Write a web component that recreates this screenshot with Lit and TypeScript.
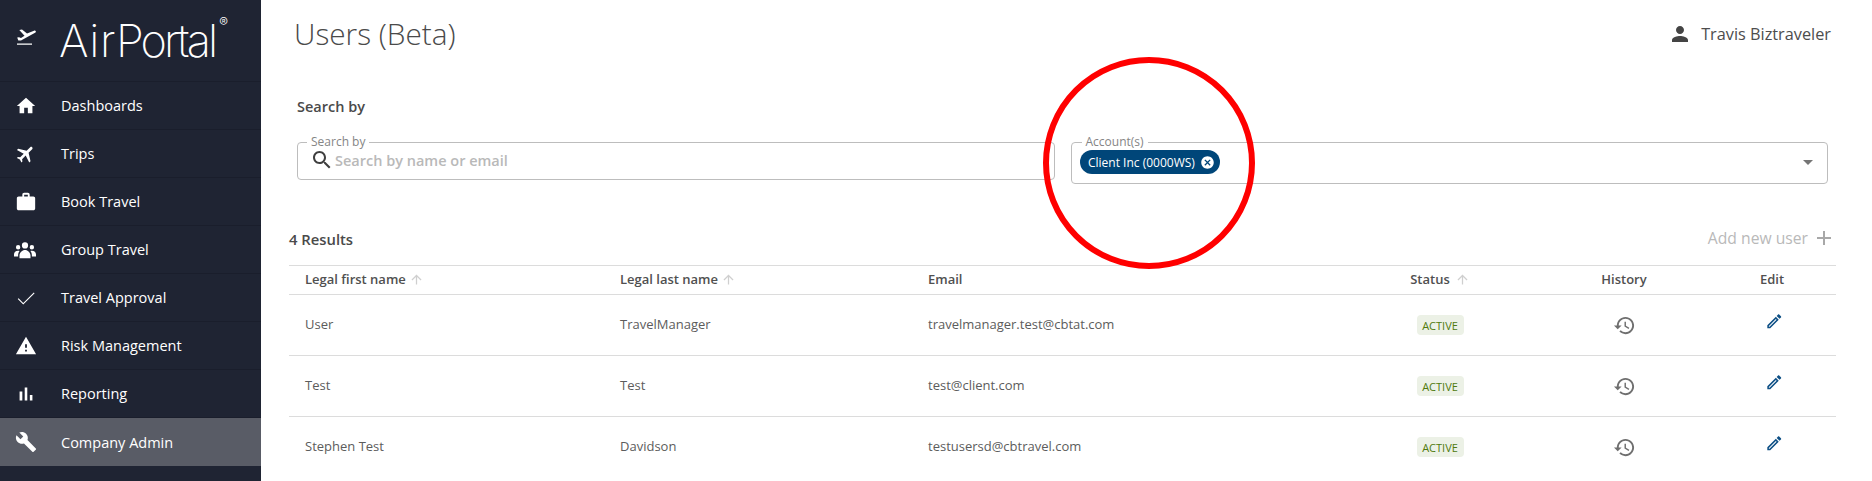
import { LitElement, html, css, svg } from "lit";
import { customElement } from "lit/decorators.js";

const P = {
  home: "M10 20v-6h4v6h5v-8h3L12 3 2 12h3v8z",
  flight: "M21 16v-2l-8-5V3.5c0-.83-.67-1.5-1.5-1.5S10 2.67 10 3.5V9l-8 5v2l8-2.5V19l-2 1.5V22l3.5-1 3.5 1v-1.5L13 19v-5.5l8 2.5z",
  work: "M20 6h-4V4c0-1.11-.89-2-2-2h-4c-1.11 0-2 .89-2 2v2H4c-1.11 0-1.99.89-1.99 2L2 19c0 1.11.89 2 2 2h16c1.11 0 2-.89 2-2V8c0-1.11-.89-2-2-2zm-6 0h-4V4h4v2z",
  groups: "M12 3.6a3.4 3.4 0 1 0 0 6.8 3.4 3.4 0 0 0 0-6.8zM4.5 6.6a2.4 2.4 0 1 0 0 4.8 2.4 2.4 0 0 0 0-4.8zM19.5 6.6a2.4 2.4 0 1 0 0 4.8 2.4 2.4 0 0 0 0-4.8zM6 21v-3c0-3 3-6 6-6s6 3 6 6v3zM0 19v-2.200c0-2.200 1.800-4 4.500-4 .6 0 1.200.1 1.600.3C5 14.500 4.500 16 4.500 18v1zM24 19v-2.200c0-2.200-1.800-4-4.500-4-.6 0-1.200.1-1.600.3C19 14.500 19.500 16 19.500 18v1z",
  done: "M9 17.4L3.9 12.3l-.9.9L9 19.2 21.4 6.8l-.9-.9z",
  warning: "M1 21h22L12 2 1 21zm12-3h-2v-2h2v2zm0-4h-2v-4h2v4z",
  bars: "M5 9.2h3V19H5zM10.6 5h2.8v14h-2.8zm5.6 8H19v6h-2.8z",
  build: "M22.7 19l-9.1-9.1c.9-2.3.4-5-1.5-6.9-2-2-5-2.4-7.4-1.3L9 6 6 9 1.6 4.7C.4 7.1.9 10.1 2.9 12.1c1.9 1.9 4.6 2.4 6.9 1.5l9.1 9.1c.4.4 1 .4 1.4 0l2.3-2.3c.5-.4.5-1.1.1-1.4z",
  takeoff: "M5.3 8L8 7.6L13 11.5L20 8.700C21.500 8.200 22.500 9.500 21.500 10.600L7 18.600L4.300 18.600L3.200 15.500L5 15.200L7 16L10.500 13.800ZM3 21.500h15v1.200H3z",
  person: "M12 12c2.21 0 4-1.790 4-4s-1.790-4-4-4-4 1.790-4 4 1.790 4 4 4zm0 2c-2.670 0-8 1.340-8 4v2h16v-2c0-2.660-5.330-4-8-4z",
  search: "M15.5 14h-.79l-.28-.27C15.41 12.59 16 11.11 16 9.5 16 5.91 13.09 3 9.5 3S3 5.91 3 9.5 5.91 16 9.5 16c1.61 0 3.09-.59 4.23-1.57l.27.28v.79l5 4.99L20.49 19l-4.99-5zm-6 0C7.01 14 5 11.99 5 9.5S7.01 5 9.5 5 14 7.01 14 9.5 11.99 14 9.5 14z",
  history: "M13 3c-4.97 0-9 4.03-9 9H1l3.89 3.89.07.14L9 12H6c0-3.87 3.13-7 7-7s7 3.13 7 7-3.13 7-7 7c-1.93 0-3.68-.79-4.94-2.06l-1.42 1.42C8.27 19.99 10.51 21 13 21c4.97 0 9-4.03 9-9s-4.03-9-9-9zm-1 5v5l4.28 2.54.72-1.21-3.5-2.08V8H12z",
  edit: "M14.06 9.02l.92.92L5.92 19H5v-.92l9.06-9.06M17.66 3c-.25 0-.51.1-.7.29l-1.83 1.83 3.75 3.75 1.83-1.83c.39-.39.39-1.02 0-1.41l-2.34-2.34c-.2-.2-.45-.29-.71-.29zm-3.6 3.19L3 17.25V21h3.75L17.81 9.94l-3.75-3.75z",
  cancel: "M12 2C6.47 2 2 6.47 2 12s4.47 10 10 10 10-4.47 10-10S17.53 2 12 2zm5 13.59L15.59 17 12 13.41 8.41 17 7 15.59 10.59 12 7 8.41 8.41 7 12 10.59 15.59 7 17 8.41 13.41 12 17 15.59z",
  up: "M4 12l1.41 1.41L11 7.83V20h2V7.83l5.58 5.59L20 12l-8-8-8 8z",
  add: "M19 13h-6v6h-2v-6H5v-2h6V5h2v6h6v2z",
};

const icon = (d: string, cls = "") =>
  html`<svg class="ic ${cls}" viewBox="0 0 24 24">${svg`<path d=${d}></path>`}</svg>`;

const NAV: [string, string, string?][] = [
  ["Dashboards", P.home],
  ["Trips", P.flight, "rot"],
  ["Book Travel", P.work],
  ["Group Travel", P.groups, "grp"],
  ["Travel Approval", P.done],
  ["Risk Management", P.warning],
  ["Reporting", P.bars],
  ["Company Admin", P.build],
];

const ROWS = [
  ["User", "TravelManager", "travelmanager.test@cbtat.com"],
  ["Test", "Test", "test@client.com"],
  ["Stephen Test", "Davidson", "testusersd@cbtravel.com"],
];

@customElement("app-root")
export class AppRoot extends LitElement {
  static styles = css`
    :host {
      display: block;
      position: relative;
      width: 1872px;
      height: 481px;
      overflow: hidden;
      background: #fff;
      font-family: "Open Sans", sans-serif;
      color: #4a4a4a;
    }
    * { box-sizing: border-box; }
    .ic { display: block; fill: currentColor; flex: none; }
    .layout { display: flex; height: 481px; }

    .side { width: 261px; flex: none; background: #1f2433; color: #fff; overflow: hidden; }
    .brand { height: 82px; display: flex; align-items: center; border-bottom: 1px solid #1a1e2c; }
    .brand .ic { width: 24px; height: 24px; margin: 0 21px 13px 14px; }
    .logo { font-family: Inter, sans-serif; font-weight: 200; font-size: 45px; line-height: 1; display: flex; margin-bottom: 1px; }
    .logo .a { letter-spacing: 0.6px; }
    .logo .p { letter-spacing: -2.9px; }
    .logo sup { font-size: 13px; font-weight: 300; line-height: 1; margin: -2px 0 0 4px; }
    .item { height: 48px; display: flex; align-items: center; border-bottom: 1px solid #1a1e2c; font-size: 14.5px; font-weight: 500; padding-left: 15px; }
    .item.active { background: #595c66; border-bottom: none; }
    .item .ic { width: 22px; height: 22px; margin-right: 24px; }
    .item .rot { transform: rotate(45deg); }
    .item .grp { transform: translateX(-1px); }

    .main { flex: 1; min-width: 0; padding: 0 36px 0 28px; }
    .top { height: 68px; display: flex; align-items: center; justify-content: space-between; padding: 0 5px 0 5px; }
    h1 { margin: 0; font-size: 29.75px; font-weight: 300; color: #4a4a4a; line-height: 1; }
    .user { display: flex; align-items: center; font-size: 16.3px; color: #4d4d4d; }
    .user .ic { width: 24px; height: 24px; margin-right: 9px; color: #444; }

    .search { padding-left: 8px; padding-right: 8px; }
    h2 { margin: 0; font-size: 14.5px; font-weight: 600; line-height: 20px; padding-top: 29px; }
    .fields { display: grid; grid-template-columns: 758px 757px; gap: 16px; margin-top: 17px; align-items: start; }
    fieldset { margin: 0; border: 1px solid #bdbdbd; border-radius: 4px; padding: 0 12px; min-width: 0; display: flex; }
    legend { font-size: 12px; line-height: 16px; color: #858585; padding: 0 4px; margin-left: -3px; }
    .f1 { height: 46px; }
    .f2 { height: 50px; padding: 0 12px 0 8px; }
    .f2 legend { margin-left: 1.5px; }
    .inp { display: flex; align-items: center; width: 100%; height: 20px; font-size: 14.5px; font-weight: 600; color: #b9b9b9; }
    .inp .ic { width: 24px; height: 24px; color: #3f3f3f; margin-right: 1px; }
    .row-f { display: flex; align-items: center; justify-content: space-between; width: 100%; height: 24px; }
    .chip { display: flex; align-items: center; height: 24px; background: #004679; color: #fff; border-radius: 12px; font-size: 12px; font-weight: 500; padding: 0 5px 0 8px; }
    .chip .ic { width: 15px; height: 15px; margin-left: 5px; }
    .caret { width: 0; height: 0; border-left: 5px solid transparent; border-right: 5px solid transparent; border-top: 5px solid #757575; margin-right: 2px; }

    .res { display: flex; align-items: center; justify-content: space-between; height: 28px; margin: 41px 0 12px; }
    .res b { font-size: 14.8px; font-weight: 600; }
    .add { display: flex; align-items: center; font-size: 15.7px; color: #b9b9b9; margin-bottom: 2px; }
    .add .ic { width: 24px; height: 24px; color: #a8a8a8; margin-left: 4px; }

    .tr { display: grid; grid-template-columns: 315px 308px 428px 200px 168px 128px; align-items: center; border-top: 1px solid #dcdcdc; font-size: 13px; }
    .tr > div { padding-left: 16px; padding-bottom: 2px; }
    .tr > .c { padding-left: 0; padding-bottom: 0; display: flex; justify-content: center; align-items: center; }
    .th { height: 29px; font-weight: 600; font-size: 13px; color: #505050; }
    .th > .c { padding-bottom: 2px; }
    .th .ic { width: 15px; height: 15px; color: #cfcfcf; margin-left: 0; display: inline-block; vertical-align: -3px; }
    .th .c .ic { margin-left: 5px; }
    .td { height: 61px; color: #5c5c5c; }
    .badge { background: #ecf1e6; color: #4f7a0d; border-radius: 4px; height: 20px; width: 47px; font-size: 11px; display: flex; align-items: center; justify-content: center; }
    .hist { width: 23px; height: 23px; color: #6f6f6f; }
    .edit { width: 18.5px; height: 18.5px; color: #0d4f85; margin: 0 0 7px 5px; }
    .ring { position: absolute; left: 1043px; top: 57px; width: 212px; height: 212px; border: 6px solid #ff0000; border-radius: 50%; pointer-events: none; }
  `;

  render() {
    return html`
      <div class="layout">
        <nav class="side">
          <div class="brand">
            ${icon(P.takeoff)}
            <div class="logo"><span class="a">Air</span><span class="p">Portal</span><sup>®</sup></div>
          </div>
          ${NAV.map(
            ([t, d, c], i) => html`<div class="item ${i === 7 ? "active" : ""}">${icon(d, c ?? "")}<span>${t}</span></div>`
          )}
        </nav>
        <main class="main">
          <header class="top">
            <h1>Users (Beta)</h1>
            <div class="user">${icon(P.person)}<span>Travis Biztraveler</span></div>
          </header>
          <section class="search">
            <h2>Search by</h2>
            <div class="fields">
              <fieldset class="f1">
                <legend>Search by</legend>
                <div class="inp">${icon(P.search)}<span>Search by name or email</span></div>
              </fieldset>
              <fieldset class="f2">
                <legend>Account(s)</legend>
                <div class="row-f">
                  <div class="chip">Client Inc (0000WS)${icon(P.cancel)}</div>
                  <div class="caret"></div>
                </div>
              </fieldset>
            </div>
          </section>
          <div class="res">
            <b>4 Results</b>
            <div class="add">Add new user ${icon(P.add)}</div>
          </div>
          <div class="tr th">
            <div>Legal first name ${icon(P.up)}</div>
            <div>Legal last name ${icon(P.up)}</div>
            <div>Email</div>
            <div class="c">Status ${icon(P.up)}</div>
            <div class="c">History</div>
            <div class="c">Edit</div>
          </div>
          ${ROWS.map(
            (r) => html`<div class="tr td">
              <div>${r[0]}</div>
              <div>${r[1]}</div>
              <div>${r[2]}</div>
              <div class="c"><span class="badge">ACTIVE</span></div>
              <div class="c">${icon(P.history, "hist")}</div>
              <div class="c">${icon(P.edit, "edit")}</div>
            </div>`
          )}
        </main>
      </div>
      <div class="ring"></div>
    `;
  }
}
